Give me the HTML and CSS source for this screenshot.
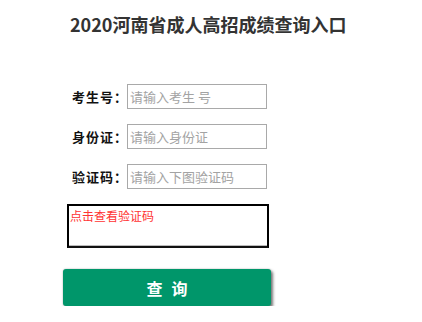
FILE: index.html
```html
<!DOCTYPE html>
<html lang="zh-CN">
<head>
<meta charset="utf-8">
<title>2020河南省成人高招成绩查询入口</title>
<link rel="stylesheet" href="styles.css">
</head>
<body>
<div class="wrap">
  <h1 class="title">2020河南省成人高招成绩查询入口</h1>
  <form class="form">
    <div class="row">
      <label class="label">考生号：</label>
      <input class="field" type="text" placeholder="请输入考生 号">
    </div>
    <div class="row">
      <label class="label">身份证：</label>
      <input class="field" type="text" placeholder="请输入身份证">
    </div>
    <div class="row">
      <label class="label">验证码：</label>
      <input class="field" type="text" placeholder="请输入下图验证码">
    </div>
    <div class="captcha">点击查看验证码</div>
    <button class="submit" type="button">查询</button>
  </form>
</div>
</body>
</html>
```

FILE: styles.css
```css
html, body {
  margin: 0;
  padding: 0;
  background: #fff;
}
body {
  font-family: "Noto Sans CJK SC", "Microsoft YaHei", sans-serif;
  color: #333;
}
.wrap {
  padding: 12px 0 0 63px;
}
.title {
  margin: 0 0 0 7px;
  font-size: 18px;
  line-height: 24px;
  font-weight: bold;
  color: #333;
}
.form {
  margin: 48px 0 0 0;
  width: 208px;
}
.row {
  display: flex;
  align-items: center;
  height: 25px;
  margin-bottom: 15px;
}
.label {
  width: 55px;
  margin-left: 9px;
  font-size: 13px;
  font-weight: bold;
  color: #111;
  letter-spacing: 1px;
  white-space: nowrap;
  overflow: hidden;
}
.field {
  box-sizing: border-box;
  width: 140px;
  height: 25px;
  margin: 0;
  padding: 0 2px;
  border: 1px solid #a9a9a9;
  font-family: "Noto Sans CJK SC", sans-serif;
  font-size: 13px;
  color: #333;
  outline: none;
}
.field::placeholder {
  color: #a3a3a3;
}
.captcha {
  box-sizing: border-box;
  width: 202px;
  height: 44px;
  margin-left: 4px;
  border: 2px solid #000;
  border-bottom-color: #111;
  box-shadow: inset 0 -1px 0 #bbb;
  padding: 2px 1px;
  font-size: 12px;
  line-height: 16px;
  color: #ff3333;
}
.submit {
  display: block;
  box-sizing: border-box;
  width: 208px;
  height: 37px;
  margin-top: 21px;
  padding: 0 0 0 9px;
  border: none;
  border-radius: 3px;
  background: #00966a;
  color: #fff;
  font-family: "Noto Sans CJK SC", sans-serif;
  font-size: 16px;
  font-weight: bold;
  letter-spacing: 9px;
  box-shadow: 2px 2px 3px #777, 0 0 2px #bbb;
  cursor: pointer;
}
```
